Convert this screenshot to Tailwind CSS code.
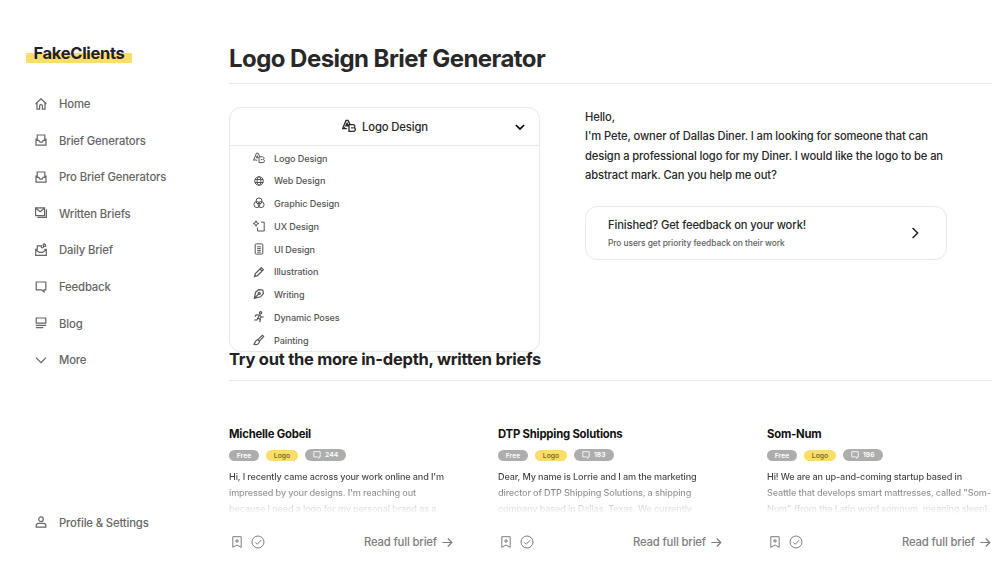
<!DOCTYPE html>
<html lang="en">
<head>
  <meta charset="UTF-8" />
  <title>Logo Design Brief Generator</title>
  <script src="https://cdn.jsdelivr.net/npm/@tailwindcss/browser@4"></script>
</head>
<body class="bg-white font-['Inter',sans-serif] text-[#282828] w-[1000px] h-[562px] overflow-hidden">
  <!-- Icon set -->
  <svg class="hidden">
    <g fill="none" stroke="currentColor" stroke-linejoin="round" stroke-linecap="round">
      <symbol id="home" viewBox="0 0 12 12"><path d="M.6 6 6 .8 11.4 6M2 5v6.2h2.6V8a1.4 1.4 0 0 1 2.8 0v3.2H10V5" /></symbol>
      <symbol id="inbox" viewBox="0 0 12 12"><path d="M2.2 6V1h7.6v5M2.2 5.2H1v6h10v-6H9.8M1 6.2l2.8.2 1.2 1.7h2l1.2-1.7 2.8-.2" /></symbol>
      <symbol id="written" viewBox="0 0 12 12"><path d="M.6.8h9v7.8h-9zM.8 1.2l4.3 3.6 4.3-3.6M11.4 2.6v7.8H2.4" /></symbol>
      <symbol id="daily" viewBox="0 0 12 14"><path d="M6 3.8H2.3v4M9.8 7v1M2.2 7.4H.7v5.9h10.6V7.4h-1.4M1 8l3.4 2.3h3.2L11 8M8.6 1.4v3.1a1.2 1.2 0 1 1-1-1.1M8.6 1.6l1.9 1.1v1.8H8.6" /></symbol>
      <symbol id="chat" viewBox="0 0 12 12"><path d="M1.2 1h9.6v7.8H9v2.2L6.6 8.8H1.2z" /></symbol>
      <symbol id="blog" viewBox="0 0 12 12"><path d="M1.2 1h9.6v5.2H1.2zM.8 8.3h10.4M.8 10.7h7.4" /></symbol>
      <symbol id="down" viewBox="0 0 12 12"><path d="m1 3.6 5 5 5-5" /></symbol>
      <symbol id="user" viewBox="0 0 12 12"><circle cx="6" cy="3.2" r="2.3" /><path d="M1.2 11.2V9.6a2.2 2.2 0 0 1 2.2-2.2h5.2a2.2 2.2 0 0 1 2.2 2.2v1.6z" /></symbol>
      <symbol id="logo" viewBox="0 0 12 12"><path d="M4.2 8.2H2.6L2.2 7.6 1.8 8.2H.6L3.4 1.2h1.8L6.8 4.6M3.3 5.8h1.8l-.8-2.2zM6 4.8h3.6a1.5 1.5 0 0 1 .8 2.7 1.6 1.6 0 0 1-.6 3.1H6zM7.8 7.6h1.6" /></symbol>
      <symbol id="web" viewBox="0 0 12 12"><circle cx="6" cy="6" r="4.3" /><ellipse cx="6" cy="6" rx="1.9" ry="4.3" /><path d="M2 4.5h8M2 7.5h8" /></symbol>
      <symbol id="graphic" viewBox="0 0 12 12"><circle cx="6" cy="4" r="3" /><circle cx="3.9" cy="7.6" r="3" /><circle cx="8.1" cy="7.6" r="3" /></symbol>
      <symbol id="ux" viewBox="0 0 12 12"><path d="M3 .8 3.8 2.8l2 .7-2 .8L3 6.3l-.8-2-2-.8 2-.7zM8 2.2h3.2v8.8H4.6V7.6" /></symbol>
      <symbol id="ui" viewBox="0 0 12 12"><rect x="2.2" y=".9" width="7.6" height="10.2" rx="1" /><path d="M4.2 3.8h3.6M4.2 5.6h3.6M4.2 7.4h3.6M4.2 9.2h3.6" /></symbol>
      <symbol id="pencil" viewBox="0 0 12 12"><path d="M1.5 10.5 2.4 7.6 8.3 1.7l2 2-5.9 5.9zM7 3l2 2" /></symbol>
      <symbol id="nib" viewBox="0 0 12 12"><path d="M1.4 10.4 2.6 4.2 5.8 1.6l4 .4.6 3.6L7.6 8.8zM1.6 10.2 5.4 6.4" /><circle cx="6.2" cy="5.4" r="1" /></symbol>
      <symbol id="pose" viewBox="0 0 12 12"><circle cx="7.6" cy="1.7" r="1.1" /><path d="M2 5.6 3.2 3.8l3.6.2 1.5 1.8 2.3.4M6.8 4 4.8 7 7.4 8.6 6.8 11.2M4.8 7.4 4 9H1.2M8.3 5.8 6.6 8" /></symbol>
      <symbol id="brush" viewBox="0 0 12 12"><path d="m4.8 5.6 4.6-4.2 1.2 1.2-4.2 4.6zM4.8 5.6c-2.4 0-2 2.6-3.8 4.6 2.4 1 5.4 0 5.4-3z" /></symbol>
      <symbol id="bookmark" viewBox="0 0 12 12"><path d="M1.8.7h8.4v10.6L6 9 1.8 11.3zM6 3v4M4 5h4" /></symbol>
      <symbol id="check" viewBox="0 0 14 14"><circle cx="7" cy="7" r="6" /><path d="m4.3 7.4 1.9 1.9 4-4.2" /></symbol>
      <symbol id="arrow" viewBox="0 0 12 12"><path d="M1.4 6.5h9.2M6.8 2.5l4 4-4 4" /></symbol>
    </g>
  </svg>

  <div class="flex h-full">
    <!-- Sidebar -->
    <aside class="w-[229px] shrink-0 h-full flex flex-col pt-[43px] text-[11.3px] tracking-[-0.15px] font-medium text-[#666]">
      <div class="ml-[26px] w-[106px] h-[20px] leading-[21px] text-center text-[16.5px] font-bold tracking-[-0.3px] text-[#222] bg-linear-to-b from-transparent from-50% to-[#fbdd69] to-50%">FakeClients</div>
      <nav class="mt-[23.5px] pl-[35px]">
        <a class="flex items-center h-[36.55px] gap-3"><svg class="size-3 -mt-[2px] fill-none stroke-current stroke-[1.2]"><use href="#home" /></svg>Home</a>
        <a class="flex items-center h-[36.55px] gap-3"><svg class="size-3 -mt-[2px] fill-none stroke-current stroke-[1.2]"><use href="#inbox" /></svg>Brief Generators</a>
        <a class="flex items-center h-[36.55px] gap-3"><svg class="size-3 -mt-[2px] fill-none stroke-current stroke-[1.2]"><use href="#inbox" /></svg>Pro Brief Generators</a>
        <a class="flex items-center h-[36.55px] gap-3"><svg class="size-3 -mt-[2px] fill-none stroke-current stroke-[1.2]"><use href="#written" /></svg>Written Briefs</a>
        <a class="flex items-center h-[36.55px] gap-3"><svg class="w-3 h-3.5 -mt-[4px] fill-none stroke-current stroke-[1.2]"><use href="#daily" /></svg>Daily Brief</a>
        <a class="flex items-center h-[36.55px] gap-3"><svg class="size-3 -mt-px fill-none stroke-current stroke-[1.2]"><use href="#chat" /></svg>Feedback</a>
        <a class="flex items-center h-[36.55px] gap-3"><svg class="size-3 -mt-[2px] fill-none stroke-current stroke-[1.2]"><use href="#blog" /></svg>Blog</a>
        <a class="flex items-center h-[36.55px] gap-3"><svg class="size-3 -mt-[2px] fill-none stroke-current stroke-[1.2]"><use href="#down" /></svg>More</a>
      </nav>
      <a class="flex items-center h-[36px] gap-3 pl-[35px] mt-auto mb-[20.5px]"><svg class="size-3 -mt-[3px] fill-none stroke-current stroke-[1.2]"><use href="#user" /></svg>Profile &amp; Settings</a>
    </aside>

    <main class="w-[763px] shrink-0 pt-[33px]">
      <h1 class="h-[51px] leading-[51px] text-[24px] font-bold tracking-[-0.55px] border-b border-[#e9e9e9] whitespace-nowrap">Logo Design Brief Generator</h1>

      <div class="flex mt-[23px]">
        <!-- Brief type dropdown -->
        <div class="w-[311px] h-[245px] border-[1.5px] border-[#e9e9e9] rounded-[12px] overflow-hidden">
          <div class="h-[38px] flex items-center border-b border-[#e9e9e9] text-[11.3px] tracking-[-0.15px] font-medium pr-[14px]">
            <div class="flex-1 flex items-center justify-center gap-[6px] pl-[25px] pt-px"><svg class="size-[14px] -mt-[3px] fill-none stroke-current stroke-[1.1]"><use href="#logo" /></svg>Logo Design</div>
            <svg class="size-[10px] fill-none stroke-black stroke-2"><use href="#down" /></svg>
          </div>
          <ul class="pl-[23px] pt-px text-[9.1px] tracking-[-0.1px] font-medium text-[#555]">
            <li class="flex items-center h-[22.75px] gap-[9px]"><svg class="size-3 -mt-px fill-none stroke-current"><use href="#logo" /></svg>Logo Design</li>
            <li class="flex items-center h-[22.75px] gap-[9px]"><svg class="size-3 -mt-px fill-none stroke-current"><use href="#web" /></svg>Web Design</li>
            <li class="flex items-center h-[22.75px] gap-[9px]"><svg class="size-3 -mt-px fill-none stroke-current"><use href="#graphic" /></svg>Graphic Design</li>
            <li class="flex items-center h-[22.75px] gap-[9px]"><svg class="size-3 -mt-px fill-none stroke-current"><use href="#ux" /></svg>UX Design</li>
            <li class="flex items-center h-[22.75px] gap-[9px]"><svg class="size-3 -mt-px fill-none stroke-current"><use href="#ui" /></svg>UI Design</li>
            <li class="flex items-center h-[22.75px] gap-[9px]"><svg class="size-3 -mt-px fill-none stroke-current stroke-[1.2]"><use href="#pencil" /></svg>Illustration</li>
            <li class="flex items-center h-[22.75px] gap-[9px]"><svg class="size-3 -mt-px fill-none stroke-current stroke-[1.2]"><use href="#nib" /></svg>Writing</li>
            <li class="flex items-center h-[22.75px] gap-[9px]"><svg class="size-3 -mt-px fill-none stroke-current stroke-[1.2]"><use href="#pose" /></svg>Dynamic Poses</li>
            <li class="flex items-center h-[22.75px] gap-[9px]"><svg class="size-3 -mt-px fill-none stroke-current stroke-[1.2]"><use href="#brush" /></svg>Painting</li>
          </ul>
        </div>

        <!-- Generated brief -->
        <div class="ml-[45px] w-[362px]">
          <p class="pt-px text-[11.2px] tracking-[-0.12px] leading-[19.3px] font-medium whitespace-nowrap">Hello,<br />I'm Pete, owner of Dallas Diner. I am looking for someone that can<br />design a professional logo for my Diner. I would like the logo to be an<br />abstract mark. Can you help me out?</p>
          <a class="mt-[21px] h-[54px] flex items-center justify-between border-[1.5px] border-[#e9e9e9] rounded-[12px] pl-[22px] pr-[25px]">
            <div>
              <div class="text-[11.2px] tracking-[-0.12px] leading-[19px] font-medium">Finished? Get feedback on your work!</div>
              <div class="text-[8.4px] tracking-[-0.05px] leading-[16px] font-medium text-[#606060]">Pro users get priority feedback on their work</div>
            </div>
            <svg class="size-3 -rotate-90 fill-none stroke-[#222] stroke-[1.5]"><use href="#down" /></svg>
          </a>
        </div>
      </div>

      <h2 class="-mt-[5px] h-[34px] leading-[24px] text-[16.5px] font-bold tracking-[-0.26px] border-b border-[#e9e9e9] whitespace-nowrap text-[#222]">Try out the more in-depth, written briefs</h2>

      <!-- Written briefs -->
      <div class="flex gap-[45px] mt-[44px]">
        <article class="w-[224px] shrink-0">
          <h3 class="text-[11.3px] tracking-[-0.2px] leading-[18px] font-bold text-[#111]">Michelle Gobeil</h3>
          <div class="flex items-center gap-[7px] mt-[6px] h-[12px] text-[6.8px] font-semibold text-white">
            <span class="w-[30px] h-[11px] leading-[11px] rounded-full bg-[#adadad] text-center">Free</span>
            <span class="w-[32px] h-[11px] leading-[11px] rounded-full bg-[#fbdd69] text-center font-medium text-[#6e6130]">Logo</span>
            <span class="px-[8px] h-[12px] rounded-full bg-[#adadad] flex items-center gap-1"><svg class="size-2 fill-none stroke-current stroke-[1.3]"><use href="#chat" /></svg>244</span>
          </div>
          <p class="mt-[8px] h-[45px] overflow-hidden text-[9.1px] tracking-[-0.13px] leading-[16px] font-medium whitespace-nowrap text-transparent bg-clip-text bg-linear-to-b from-[#222] to-white">Hi, I recently came across your work online and I'm<br />impressed by your designs. I'm reaching out<br />because I need a logo for my personal brand as a</p>
          <div class="flex items-center mt-[18px] h-[20px] text-[11.3px] tracking-[-0.15px] font-medium text-[#7d7d7d]">
            <svg class="size-3 ml-[2px] -mt-px fill-none stroke-current"><use href="#bookmark" /></svg>
            <svg class="size-[14px] ml-[8px] -mt-px fill-none stroke-current"><use href="#check" /></svg>
            <span class="ml-auto pt-px">Read full brief</span>
            <svg class="size-3 ml-1 fill-none stroke-current stroke-[1.2]"><use href="#arrow" /></svg>
          </div>
        </article>
        <article class="w-[224px] shrink-0">
          <h3 class="text-[11.3px] tracking-[-0.2px] leading-[18px] font-bold text-[#111]">DTP Shipping Solutions</h3>
          <div class="flex items-center gap-[7px] mt-[6px] h-[12px] text-[6.8px] font-semibold text-white">
            <span class="w-[30px] h-[11px] leading-[11px] rounded-full bg-[#adadad] text-center">Free</span>
            <span class="w-[32px] h-[11px] leading-[11px] rounded-full bg-[#fbdd69] text-center font-medium text-[#6e6130]">Logo</span>
            <span class="px-[8px] h-[12px] rounded-full bg-[#adadad] flex items-center gap-1"><svg class="size-2 fill-none stroke-current stroke-[1.3]"><use href="#chat" /></svg>183</span>
          </div>
          <p class="mt-[8px] h-[45px] overflow-hidden text-[9.1px] tracking-[-0.13px] leading-[16px] font-medium whitespace-nowrap text-transparent bg-clip-text bg-linear-to-b from-[#222] to-white">Dear, My name is Lorrie and I am the marketing<br />director of DTP Shipping Solutions, a shipping<br />company based in Dallas, Texas. We currently</p>
          <div class="flex items-center mt-[18px] h-[20px] text-[11.3px] tracking-[-0.15px] font-medium text-[#7d7d7d]">
            <svg class="size-3 ml-[2px] -mt-px fill-none stroke-current"><use href="#bookmark" /></svg>
            <svg class="size-[14px] ml-[8px] -mt-px fill-none stroke-current"><use href="#check" /></svg>
            <span class="ml-auto pt-px">Read full brief</span>
            <svg class="size-3 ml-1 fill-none stroke-current stroke-[1.2]"><use href="#arrow" /></svg>
          </div>
        </article>
        <article class="w-[224px] shrink-0">
          <h3 class="text-[11.3px] tracking-[-0.2px] leading-[18px] font-bold text-[#111]">Som-Num</h3>
          <div class="flex items-center gap-[7px] mt-[6px] h-[12px] text-[6.8px] font-semibold text-white">
            <span class="w-[30px] h-[11px] leading-[11px] rounded-full bg-[#adadad] text-center">Free</span>
            <span class="w-[32px] h-[11px] leading-[11px] rounded-full bg-[#fbdd69] text-center font-medium text-[#6e6130]">Logo</span>
            <span class="px-[8px] h-[12px] rounded-full bg-[#adadad] flex items-center gap-1"><svg class="size-2 fill-none stroke-current stroke-[1.3]"><use href="#chat" /></svg>196</span>
          </div>
          <p class="mt-[8px] h-[45px] overflow-hidden text-[9.1px] tracking-[-0.13px] leading-[16px] font-medium whitespace-nowrap text-transparent bg-clip-text bg-linear-to-b from-[#222] to-white">Hi! We are an up-and-coming startup based in<br />Seattle that develops smart mattresses, called "Som-<br />Num" (from the Latin word somnum, meaning sleep).</p>
          <div class="flex items-center mt-[18px] h-[20px] text-[11.3px] tracking-[-0.15px] font-medium text-[#7d7d7d]">
            <svg class="size-3 ml-[2px] -mt-px fill-none stroke-current"><use href="#bookmark" /></svg>
            <svg class="size-[14px] ml-[8px] -mt-px fill-none stroke-current"><use href="#check" /></svg>
            <span class="ml-auto pt-px">Read full brief</span>
            <svg class="size-3 ml-1 fill-none stroke-current stroke-[1.2]"><use href="#arrow" /></svg>
          </div>
        </article>
      </div>
    </main>
  </div>
</body>
</html>
